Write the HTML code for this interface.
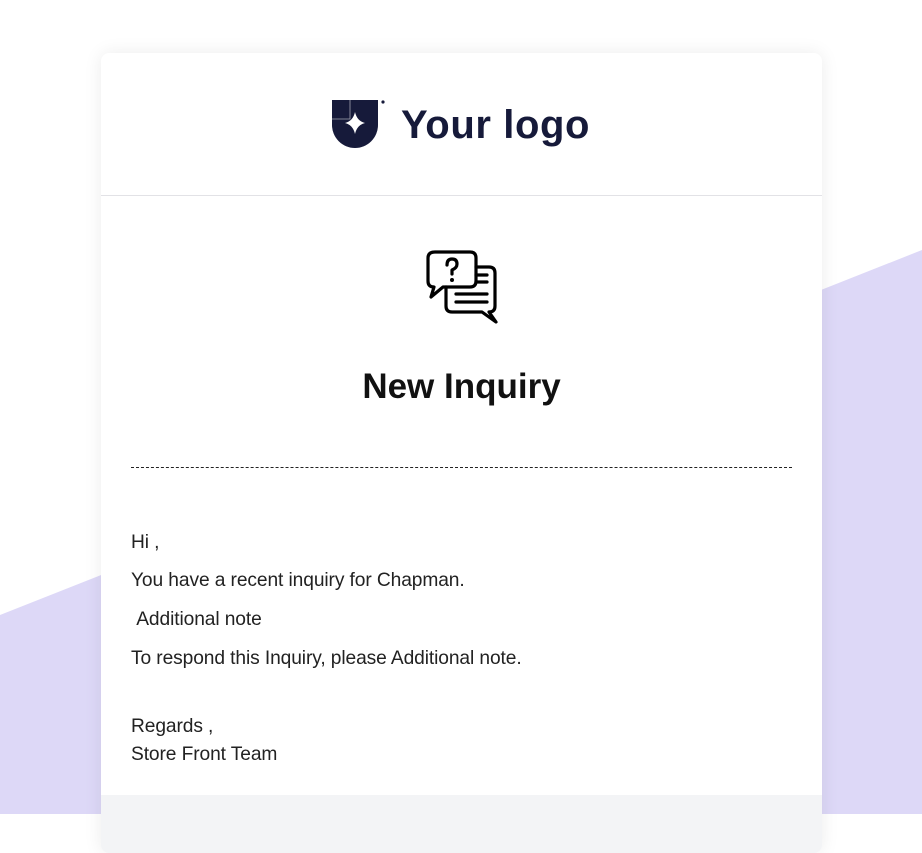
<!DOCTYPE html>
<html><head><style>
body{margin:0;width:922px;height:814px;overflow:hidden;background:#fff;font-family:"Liberation Sans",sans-serif;position:relative}
.bg{position:absolute;left:0;top:0}
.card{position:absolute;left:101px;top:53px;width:721px;height:800px;background:#fff;border-radius:8px;box-shadow:0 0 18px rgba(0,0,0,0.08);overflow:hidden}
.hdr{height:142px;border-bottom:1px solid #e2e2e6;position:relative}
.foot{position:absolute;left:0;top:742px;width:100%;height:60px;background:#f3f4f6}
.title{position:absolute;top:314px;width:100%;text-align:center;font-size:35px;font-weight:bold;color:#111}
.dash{position:absolute;left:30px;top:414px;width:661px;border-top:1px dashed #222}
.txt{position:absolute;left:30px;font-size:19.2px;color:#222;letter-spacing:-0.1px}
</style></head><body>
<svg class="bg" width="922" height="814"><polygon points="0,615 922,250 922,814 0,814" fill="#ddd8f7"/></svg>
<div class="card">
<div class="hdr">
<svg style="position:absolute;left:229px;top:46px" width="60" height="50" viewBox="0 0 60 50">
<path d="M2 1 H48 V26 A23 23 0 0 1 2 26 Z" fill="#161a3a"/>
<path d="M2 20 H20 V1" stroke="#fff" stroke-width="0.8" fill="none" opacity=".6"/>
<path d="M25 13 Q27 22 35 24 Q27 26 25 35 Q23 26 15 24 Q23 22 25 13Z" fill="#fff"/>
<circle cx="53" cy="3" r="1.6" fill="#161a3a"/>
</svg>
<div style="position:absolute;left:300px;top:50px;font-size:40px;font-weight:bold;color:#161a3a;letter-spacing:0.6px">Your logo</div>
</div>
<svg style="position:absolute;left:324px;top:196px" width="76" height="76" viewBox="0 0 76 76">
<g fill="none" stroke="#000" stroke-width="3.2" stroke-linejoin="round" stroke-linecap="round">
<path d="M10 3 H45 Q51 3 51 9 V32 Q51 38 45 38 H18 L6 48 L9 38 Q3 38 3 32 V9 Q3 3 10 3Z"/>
<path d="M51 18 H64 Q70 18 70 24 V57 Q70 63 64 63 L71 73 L57 63 H27 Q21 63 21 57 V38"/>
<path d="M51 26 H62 M51 33 H62 M31 45 H62 M31 53 H62"/>
<path d="M22 16 Q22 10 27 10 Q32 10 32 15 Q32 19 27 21 V25"/>
</g><circle cx="27" cy="31" r="2" fill="#000"/>
</svg>
<div class="title">New Inquiry</div>
<div class="dash"></div>
<div class="txt" style="top:479px">Hi ,</div>
<div class="txt" style="top:517px">You have a recent inquiry for Chapman.</div>
<div class="txt" style="top:556px">&nbsp;Additional note</div>
<div class="txt" style="top:595px">To respond this Inquiry, please Additional note.</div>
<div class="txt" style="top:663px">Regards ,</div>
<div class="txt" style="top:691px">Store Front Team</div>
<div class="foot"></div>
</div>
</body></html>
